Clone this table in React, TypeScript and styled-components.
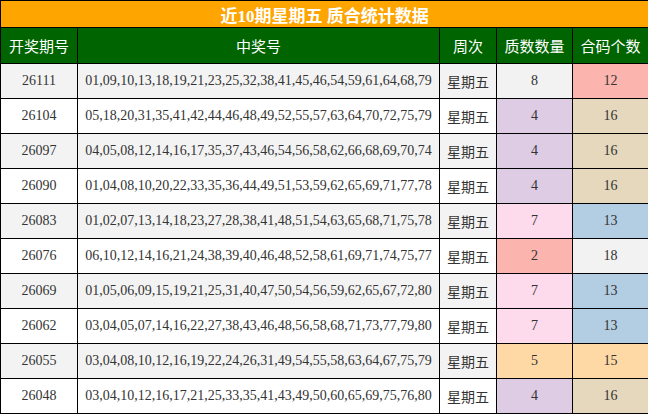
// 近10期星期五 质合统计数据 table

import styled, { createGlobalStyle } from "styled-components";

const GlobalStyle = createGlobalStyle`
  body {
    margin: 0;
    background: #ffffff;
    font-family: "Liberation Serif", "Noto Sans CJK SC", serif;
  }
`;

// Pastel1 colours used for the count cells
const palette: Record<number, string> = {
  2: "#fbb4ae",
  4: "#decbe4",
  5: "#fed9a6",
  7: "#fddaec",
  8: "#f2f2f2",
  12: "#fbb4ae",
  13: "#b3cde3",
  15: "#fed9a6",
  16: "#e5d8bd",
  18: "#f2f2f2",
};

const Table = styled.table`
  width: 648px;
  border-collapse: collapse;
  table-layout: fixed;
  font-family: "Liberation Serif", "Noto Sans CJK SC", serif;
`;

const Caption = styled.th`
  height: 26px;
  padding: 0;
  background: #ffa500;
  color: #ffffff;
  font-size: 17px;
  font-weight: bold;
  border: 1px solid #000000;
  text-align: center;
`;

const Head = styled.th`
  height: 35px;
  padding: 0;
  background: #006400;
  color: #ffffff;
  font-size: 15px;
  font-weight: normal;
  border: 1px solid #000000;
  text-align: center;
`;

const Row = styled.tr<{ $odd: boolean }>`
  background: ${(p) => (p.$odd ? "#f3f3f3" : "#ffffff")};
`;

const Cell = styled.td<{ $bg?: string }>`
  height: 34px;
  padding: 0;
  border: 1px solid #000000;
  color: #333333;
  font-size: 14px;
  text-align: center;
  white-space: nowrap;
  background: ${(p) => p.$bg || "transparent"};
`;

const rows = [
  ["26111", "01,09,10,13,18,19,21,23,25,32,38,41,45,46,54,59,61,64,68,79", 8, 12],
  ["26104", "05,18,20,31,35,41,42,44,46,48,49,52,55,57,63,64,70,72,75,79", 4, 16],
  ["26097", "04,05,08,12,14,16,17,35,37,43,46,54,56,58,62,66,68,69,70,74", 4, 16],
  ["26090", "01,04,08,10,20,22,33,35,36,44,49,51,53,59,62,65,69,71,77,78", 4, 16],
  ["26083", "01,02,07,13,14,18,23,27,28,38,41,48,51,54,63,65,68,71,75,78", 7, 13],
  ["26076", "06,10,12,14,16,21,24,38,39,40,46,48,52,58,61,69,71,74,75,77", 2, 18],
  ["26069", "01,05,06,09,15,19,21,25,31,40,47,50,54,56,59,62,65,67,72,80", 7, 13],
  ["26062", "03,04,05,07,14,16,22,27,38,43,46,48,56,58,68,71,73,77,79,80", 7, 13],
  ["26055", "03,04,08,10,12,16,19,22,24,26,31,49,54,55,58,63,64,67,75,79", 5, 15],
  ["26048", "03,04,10,12,16,17,21,25,33,35,41,43,49,50,60,65,69,75,76,80", 4, 16],
] as const;

export default () => {
  return (
    <>
      <GlobalStyle />
      <Table>
        <colgroup>
          <col style={{ width: 77 }} />
          <col style={{ width: 362 }} />
          <col style={{ width: 57 }} />
          <col style={{ width: 76 }} />
          <col style={{ width: 76 }} />
        </colgroup>
        <thead>
          <tr>
            <Caption colSpan={5}>近10期星期五 质合统计数据</Caption>
          </tr>
          <tr>
            <Head>开奖期号</Head>
            <Head>中奖号</Head>
            <Head>周次</Head>
            <Head>质数数量</Head>
            <Head>合码个数</Head>
          </tr>
        </thead>
        <tbody>
          {rows.map(([issue, nums, prime, comp], i) => (
            <Row key={issue} $odd={i % 2 === 0}>
              <Cell>{issue}</Cell>
              <Cell>{nums}</Cell>
              <Cell>星期五</Cell>
              <Cell $bg={palette[prime]}>{prime}</Cell>
              <Cell $bg={palette[comp]}>{comp}</Cell>
            </Row>
          ))}
        </tbody>
      </Table>
    </>
  );
};
